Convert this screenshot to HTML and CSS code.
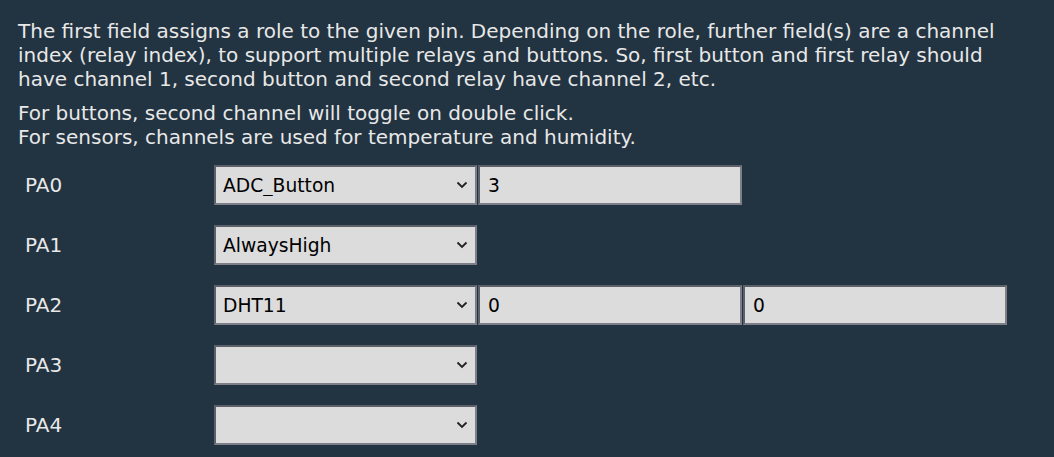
FILE: index.html
```html
<!DOCTYPE html>
<html>
<head>
<meta charset="utf-8">
<link rel="stylesheet" href="styles.css">
</head>
<body>
<div class="page">
  <p class="intro">The first field assigns a role to the given pin. Depending on the role, further field(s) are a channel index (relay index), to support multiple relays and buttons. So, first button and first relay should have channel 1, second button and second relay have channel 2, etc.</p>
  <p class="intro">For buttons, second channel will toggle on double click.<br>For sensors, channels are used for temperature and humidity.</p>
  <div class="pins">
    <div class="row">
      <span class="label">PA0</span>
      <div class="fields">
        <div class="select-wrap">
          <select class="field sel"><option>ADC_Button</option></select>
          <svg class="chev" width="12" height="8" viewBox="0 0 12 8"><path d="M1.5 1.5 L6 6 L10.5 1.5" fill="none" stroke="#222" stroke-width="1.8"/></svg>
        </div>
        <input class="field inp" type="text" value="3">
      </div>
    </div>
    <div class="row">
      <span class="label">PA1</span>
      <div class="fields">
        <div class="select-wrap">
          <select class="field sel"><option>AlwaysHigh</option></select>
          <svg class="chev" width="12" height="8" viewBox="0 0 12 8"><path d="M1.5 1.5 L6 6 L10.5 1.5" fill="none" stroke="#222" stroke-width="1.8"/></svg>
        </div>
      </div>
    </div>
    <div class="row">
      <span class="label">PA2</span>
      <div class="fields">
        <div class="select-wrap">
          <select class="field sel"><option>DHT11</option></select>
          <svg class="chev" width="12" height="8" viewBox="0 0 12 8"><path d="M1.5 1.5 L6 6 L10.5 1.5" fill="none" stroke="#222" stroke-width="1.8"/></svg>
        </div>
        <input class="field inp" type="text" value="0">
        <input class="field inp" type="text" value="0">
      </div>
    </div>
    <div class="row">
      <span class="label">PA3</span>
      <div class="fields">
        <div class="select-wrap">
          <select class="field sel"><option></option></select>
          <svg class="chev" width="12" height="8" viewBox="0 0 12 8"><path d="M1.5 1.5 L6 6 L10.5 1.5" fill="none" stroke="#222" stroke-width="1.8"/></svg>
        </div>
      </div>
    </div>
    <div class="row">
      <span class="label">PA4</span>
      <div class="fields">
        <div class="select-wrap">
          <select class="field sel"><option></option></select>
          <svg class="chev" width="12" height="8" viewBox="0 0 12 8"><path d="M1.5 1.5 L6 6 L10.5 1.5" fill="none" stroke="#222" stroke-width="1.8"/></svg>
        </div>
      </div>
    </div>
  </div>
</div>
</body>
</html>
```
FILE: styles.css
```css
html, body {
  margin: 0;
  padding: 0;
  background: #223341;
}
body {
  font-family: "DejaVu Sans", sans-serif;
  font-size: 20px;
  color: #e8e8e8;
}
.page {
  padding: 19px 18px 0 18px;
}
.intro {
  margin: 0;
  line-height: 24px;
}
.intro + .intro {
  margin-top: 10px;
}
.pins {
  margin-top: 6px;
}
.row {
  display: flex;
  align-items: center;
  height: 60px;
}
.label {
  width: 196px;
  padding-left: 7px;
  box-sizing: border-box;
}
.fields {
  display: flex;
  gap: 1px;
}
.select-wrap {
  position: relative;
  width: 263px;
  height: 40px;
}
.chev {
  position: absolute;
  right: 9px;
  top: 16px;
  pointer-events: none;
}
.field {
  box-sizing: border-box;
  height: 40px;
  margin: 0;
  font-family: "DejaVu Sans", sans-serif;
  font-size: 18.7px;
  color: #000;
  background-color: #dcdcdc;
  border-style: solid;
  border-width: 2px;
  border-color: #5b6069 #7e7e89 #7e7e89 #5b6069;
  border-radius: 0;
  outline: none;
}
.sel {
  width: 263px;
  appearance: none;
  -webkit-appearance: none;
  padding: 0 24px 0 7px;
}
.inp {
  width: 264px;
  padding: 0 8px;
}
```
